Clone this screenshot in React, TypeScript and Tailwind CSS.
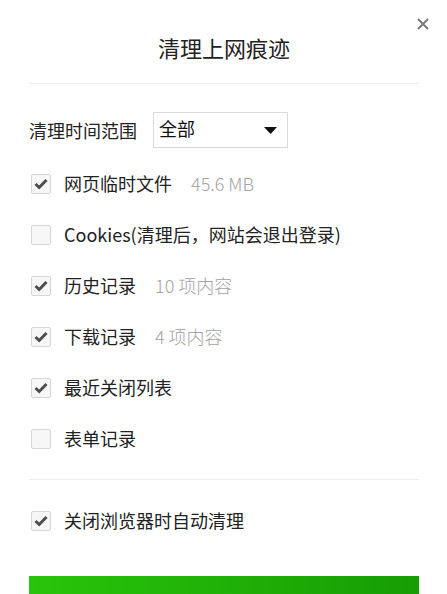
import { Fragment } from "react";

interface Item {
  label: string;
  hint?: string;
  checked: boolean;
}

const items: Item[] = [
  { label: "网页临时文件", hint: "45.6 MB", checked: true },
  { label: "Cookies(清理后，网站会退出登录)", checked: false },
  { label: "历史记录", hint: "10 项内容", checked: true },
  { label: "下载记录", hint: "4 项内容", checked: true },
  { label: "最近关闭列表", checked: true },
  { label: "表单记录", checked: false },
];

const font = { fontFamily: '"Microsoft YaHei", "Noto Sans CJK SC", "Noto Sans", sans-serif' };

const Checkbox = ({ checked }: { checked: boolean }) => (
  <span className="ml-[2px] flex h-[20px] w-[20px] shrink-0 items-center justify-center rounded-[2px] border border-[#d6d6d6] bg-[#f7f7f7]">
    {checked && (
      <svg width="14" height="12" viewBox="0 0 14 12">
        <path d="M1.5 6 L5.2 9.5 L12.5 2" fill="none" stroke="#4d4d4d" strokeWidth="3" />
      </svg>
    )}
  </span>
);

const Row = ({ item }: { item: Item }) => (
  <label className="flex h-[51px] cursor-pointer items-center">
    <Checkbox checked={item.checked} />
    <span className="ml-[13px] text-[18px] text-[#222]">{item.label}</span>
    {item.hint && <span className="ml-[19px] text-[18px] font-light text-[#a3a3a3]">{item.hint}</span>}
  </label>
);

export default function App() {
  return (
    <div className="relative h-[594px] w-[447px] overflow-hidden bg-white px-[29px] pr-[28px]" style={font}>
      <button className="absolute right-[18px] top-[18px] flex h-[12px] w-[12px] items-center justify-center">
        <svg width="12" height="12" viewBox="0 0 12 12">
          <path d="M1 1 L11 11 M11 1 L1 11" stroke="#7a7a7a" strokeWidth="2" />
        </svg>
      </button>

      <div className="border-b border-[#eeeeee] pb-[19px] pt-[30px] text-center text-[22px] leading-[34px] text-[#222]">
        清理上网痕迹
      </div>

      <div className="mt-[28px] flex items-center">
        <span className="text-[18px] text-[#222]">清理时间范围</span>
        <div className="ml-[16px] flex h-[36px] w-[135px] items-center justify-between border border-[#d9d9d9] pl-[5px] pr-[10px]">
          <span className="-mt-[4px] text-[18px] text-[#111]">全部</span>
          <svg width="13" height="7" viewBox="0 0 13 7">
            <path d="M0 0 H13 L6.5 7 Z" fill="#111" />
          </svg>
        </div>
      </div>

      <div className="mt-[10px] border-b border-[#eeeeee] pb-[15px]">
        {items.map((item) => (
          <Fragment key={item.label}>
            <Row item={item} />
          </Fragment>
        ))}
      </div>

      <div className="mt-[15px]">
        <Row item={{ label: "关闭浏览器时自动清理", checked: true }} />
      </div>

      <button className="mt-[30px] h-[44px] w-full bg-gradient-to-r from-[#29c50a] to-[#169d04]" />
    </div>
  );
}
